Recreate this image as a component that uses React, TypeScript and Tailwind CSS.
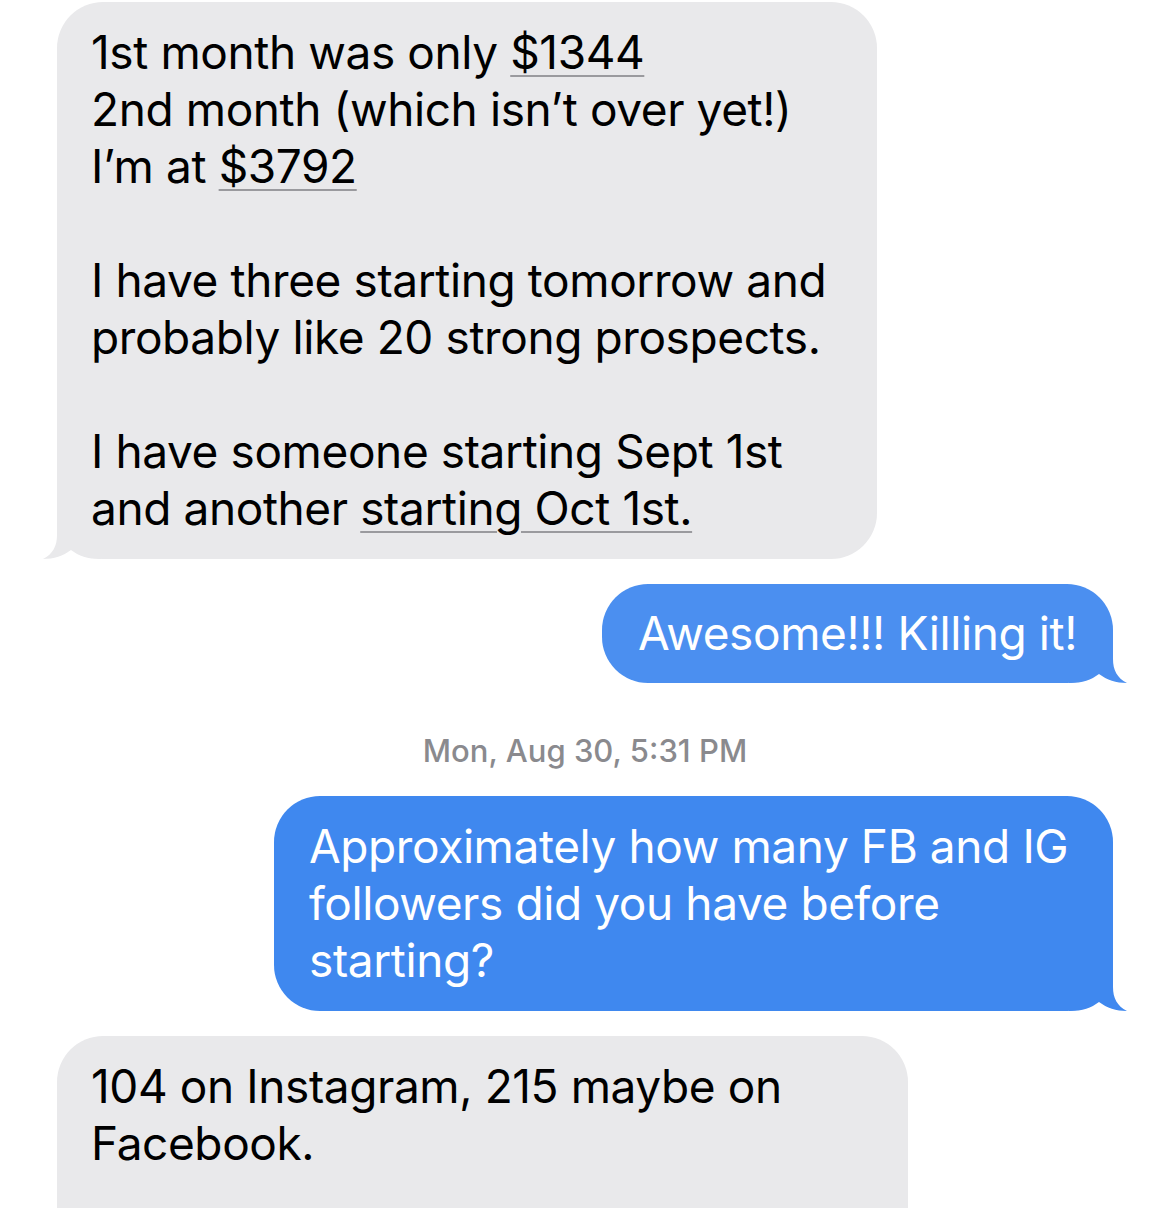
import React from "react";

function Tail({ color, side }: { color: string; side: "left" | "right" }) {
  return (
    <svg
      width="60"
      height="50"
      viewBox="0 0 60 50"
      className={
        side === "left"
          ? "absolute bottom-0 left-[-16px]"
          : "absolute bottom-0 right-[-16px] -scale-x-100"
      }
    >
      <path
        d="M16 0 L16 26 C16 37 12 45 2 50 C13 50 22 47 30 41 C38 47 46 50 60 50 L60 0 Z"
        fill={color}
      />
    </svg>
  );
}

const U = ({ children }: { children: React.ReactNode }) => (
  <span className="underline decoration-[#9a9a9e] decoration-[2px] underline-offset-[6px]">
    {children}
  </span>
);

const bubbleText = "relative text-[46px] leading-[57px] tracking-[-0.4px]";

export default function App() {
  return (
    <div className="h-[1208px] overflow-hidden bg-white font-['Inter','Noto_Sans',sans-serif] text-black flex flex-col pt-[2px] pl-[57px] pr-[56px]">
      <div className="relative shrink-0 self-start w-[820px] rounded-[46px] bg-[#e9e9eb] px-[34px] py-[22px]">
        <Tail color="#e9e9eb" side="left" />
        <div className={bubbleText}>
          <p>
            1st month was only <U>$1344</U>
          </p>
          <p>2nd month (which isn’t over yet!)</p>
          <p>
            I’m at <U>$3792</U>
          </p>
          <p>&nbsp;</p>
          <p>I have three starting tomorrow and</p>
          <p>probably like 20 strong prospects.</p>
          <p>&nbsp;</p>
          <p>I have someone starting Sept 1st</p>
          <p>
            and another <U>starting Oct 1st.</U>
          </p>
        </div>
      </div>

      <div className="relative shrink-0 self-end mt-[25px] rounded-[46px] bg-[#4b8ff0] px-[36px] py-[21px] text-white">
        <Tail color="#4b8ff0" side="right" />
        <div className={bubbleText}>
          <p>Awesome!!! Killing it!</p>
        </div>
      </div>

      <div className="shrink-0 pt-[51px] pb-[28px] text-center text-[31px] leading-[34px] font-medium text-[#8a8a8e]">
        Mon, Aug 30, 5:31 PM
      </div>

      <div className="relative shrink-0 self-end w-[839px] rounded-[46px] bg-[#3f88ef] px-[35px] py-[22px] text-white">
        <Tail color="#3f88ef" side="right" />
        <div className={bubbleText}>
          <p>Approximately how many FB and IG</p>
          <p>followers did you have before</p>
          <p>starting?</p>
        </div>
      </div>

      <div className="relative shrink-0 self-start mt-[25px] w-[851px] h-[400px] rounded-[46px] bg-[#e9e9eb] px-[34px] py-[22px]">
        <div className={bubbleText}>
          <p>104 on Instagram, 215 maybe on</p>
          <p>Facebook.</p>
        </div>
      </div>
    </div>
  );
}
